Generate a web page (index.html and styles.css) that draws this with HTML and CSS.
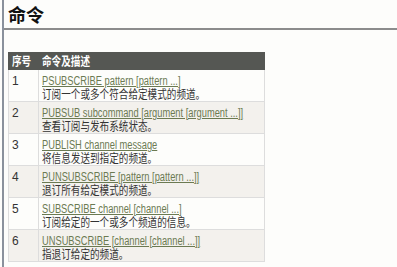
FILE: index.html
```html
<!DOCTYPE html>
<html>
<head>
<meta charset="utf-8">
<link rel="stylesheet" href="styles.css">
</head>
<body>
<div class="page">
  <h2 class="title">命令</h2>
  <table class="cmds">
    <colgroup><col class="c-num"><col class="c-cmd"></colgroup>
    <thead>
      <tr><th><span class="cjk">序号</span></th><th><span class="cjk">命令及描述</span></th></tr>
    </thead>
    <tbody>
      <tr><td>1</td><td><a class="cmd" href="#">PSUBSCRIBE pattern [pattern ...]</a><span class="cjk">订阅一个或多个符合给定模式的频道。</span></td></tr>
      <tr class="alt"><td>2</td><td><a class="cmd" href="#">PUBSUB subcommand [argument [argument ...]]</a><span class="cjk">查看订阅与发布系统状态。</span></td></tr>
      <tr><td>3</td><td><a class="cmd" href="#">PUBLISH channel message</a><span class="cjk">将信息发送到指定的频道。</span></td></tr>
      <tr class="alt"><td>4</td><td><a class="cmd" href="#">PUNSUBSCRIBE [pattern [pattern ...]]</a><span class="cjk">退订所有给定模式的频道。</span></td></tr>
      <tr><td>5</td><td><a class="cmd" href="#">SUBSCRIBE channel [channel ...]</a><span class="cjk">订阅给定的一个或多个频道的信息。</span></td></tr>
      <tr class="alt"><td>6</td><td><a class="cmd" href="#">UNSUBSCRIBE [channel [channel ...]]</a><span class="cjk">指退订给定的频道。</span></td></tr>
    </tbody>
  </table>
</div>
</body>
</html>
```
FILE: styles.css
```css
html, body {
  margin: 0;
  padding: 0;
  background: #fdfdfb;
}
body {
  font-family: "Liberation Sans", "Noto Sans CJK SC", sans-serif;
  color: #333;
}
.page {
  height: 267px;
  overflow: hidden;
  border-left: 2px solid #8a919c;
  margin-left: 2px;
  padding-top: 4px;
  box-sizing: border-box;
}
.title {
  margin: 0;
  padding: 0 0 4px 4px;
  font-family: "Noto Sans CJK SC", sans-serif;
  font-size: 18px;
  line-height: 20px;
  font-weight: bold;
  color: #111;
  border-bottom: 2px solid #8c8c8c;
}
.cmds {
  margin: 22px 0 0 4px;
  border-collapse: collapse;
  table-layout: fixed;
  width: 257px;
  font-size: 12px;
  white-space: nowrap;
}
.c-num {
  width: 30px;
}
.cjk {
  display: block;
  height: 14px;
  line-height: 14px;
  font-family: "Noto Sans CJK SC", sans-serif;
  font-size: 12px;
  transform: scaleX(0.8);
  transform-origin: left center;
}
.cmd {
  display: block;
  height: 12px;
  line-height: 12px;
  transform: scaleX(0.775);
  transform-origin: left center;
  color: #6b7a52;
  text-decoration: underline;
}
.cmds th {
  background: #555753;
  color: #fff;
  text-align: left;
  font-weight: bold;
  height: 16px;
  padding: 0 3px;
  line-height: 14px;
  border: 1px solid #555753;
}
.cmds th .cjk {
  font-size: 12px;
  line-height: 16px;
  height: 16px;
}
.cmds td {
  border: 1px solid #ddd;
  padding: 5px 3px 0;
  height: 26px;
  vertical-align: top;
  line-height: 13px;
}
.cmds tr.alt td {
  background: #f3f1ed;
}
```
